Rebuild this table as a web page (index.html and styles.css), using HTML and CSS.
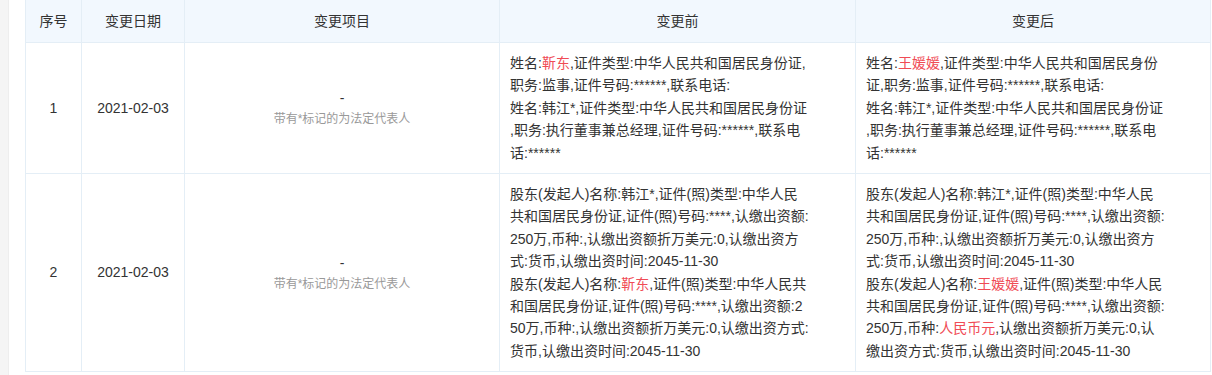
FILE: index.html
```html
<!DOCTYPE html>
<html lang="zh-CN">
<head>
<meta charset="utf-8">
<title>变更记录</title>
<link rel="stylesheet" href="styles.css">
</head>
<body>
<div class="panel">
  <table class="ntable">
    <colgroup>
      <col class="c-no">
      <col class="c-date">
      <col class="c-item">
      <col class="c-before">
      <col class="c-after">
    </colgroup>
    <thead>
      <tr>
        <th>序号</th>
        <th>变更日期</th>
        <th>变更项目</th>
        <th>变更前</th>
        <th>变更后</th>
      </tr>
    </thead>
    <tbody>
      <tr>
        <td class="center">1</td>
        <td class="center">2021-02-03</td>
        <td class="center">
          <div class="dash">-</div>
          <div class="note">带有*标记的为法定代表人</div>
        </td>
        <td><div class="txt">姓名:<span class="hl">靳东</span>,证件类型:中华人民共和国居民身份证,职务:监事,证件号码:******,联系电话:<br>姓名:韩江*,证件类型:中华人民共和国居民身份证,职务:执行董事兼总经理,证件号码:******,联系电话:******</div></td>
        <td><div class="txt">姓名:<span class="hl">王媛媛</span>,证件类型:中华人民共和国居民身份证,职务:监事,证件号码:******,联系电话:<br>姓名:韩江*,证件类型:中华人民共和国居民身份证,职务:执行董事兼总经理,证件号码:******,联系电话:******</div></td>
      </tr>
      <tr>
        <td class="center">2</td>
        <td class="center">2021-02-03</td>
        <td class="center">
          <div class="dash">-</div>
          <div class="note">带有*标记的为法定代表人</div>
        </td>
        <td><div class="txt">股东(发起人)名称:韩江*,证件(照)类型:中华人民共和国居民身份证,证件(照)号码:****,认缴出资额:250万,币种:,认缴出资额折万美元:0,认缴出资方式:货币,认缴出资时间:2045-11-30<br>股东(发起人)名称:<span class="hl">靳东</span>,证件(照)类型:中华人民共和国居民身份证,证件(照)号码:****,认缴出资额:250万,币种:,认缴出资额折万美元:0,认缴出资方式:货币,认缴出资时间:2045-11-30</div></td>
        <td><div class="txt">股东(发起人)名称:韩江*,证件(照)类型:中华人民共和国居民身份证,证件(照)号码:****,认缴出资额:250万,币种:,认缴出资额折万美元:0,认缴出资方式:货币,认缴出资时间:2045-11-30<br>股东(发起人)名称:<span class="hl">王媛媛</span>,证件(照)类型:中华人民共和国居民身份证,证件(照)号码:****,认缴出资额:250万,币种:<span class="hl">人民币元</span>,认缴出资额折万美元:0,认缴出资方式:货币,认缴出资时间:2045-11-30</div></td>
      </tr>
    </tbody>
  </table>
</div>
</body>
</html>
```

FILE: styles.css
```css
html, body {
  margin: 0;
  padding: 0;
}

body {
  background: #f5f5f5;
  font-family: "Liberation Sans", "Noto Sans CJK SC", sans-serif;
  font-size: 14px;
  color: #333;
  display: flex;
  min-height: 375px;
}

.panel {
  flex: 1;
  margin-left: 8px;
  background: #fff;
  border-left: 1px solid #eeeeee;
  padding-left: 16px;
}

.ntable {
  border-collapse: collapse;
  table-layout: fixed;
  width: 1185px;
}

.c-no { width: 56px; }
.c-date { width: 103px; }
.c-item { width: 315px; }
.c-before { width: 356px; }
.c-after { width: 355px; }

.ntable th,
.ntable td {
  border: 1px solid #e4eef6;
}

.ntable th {
  border-top: none;
  background: #f2f8fe;
  height: 42px;
  padding: 0 10px;
  font-weight: normal;
  color: #333;
  text-align: center;
  line-height: 22px;
}

.ntable td {
  padding: 9px 10px;
  line-height: 22.4px;
  vertical-align: middle;
}

.ntable td.center {
  text-align: center;
}

.txt {
  width: 299px;
  word-break: break-all;
  line-break: anywhere;
}

.hl {
  color: #f04b55;
}

.dash {
  line-height: 22px;
}

.note {
  font-size: 12px;
  line-height: 20px;
  color: #999;
}
```
